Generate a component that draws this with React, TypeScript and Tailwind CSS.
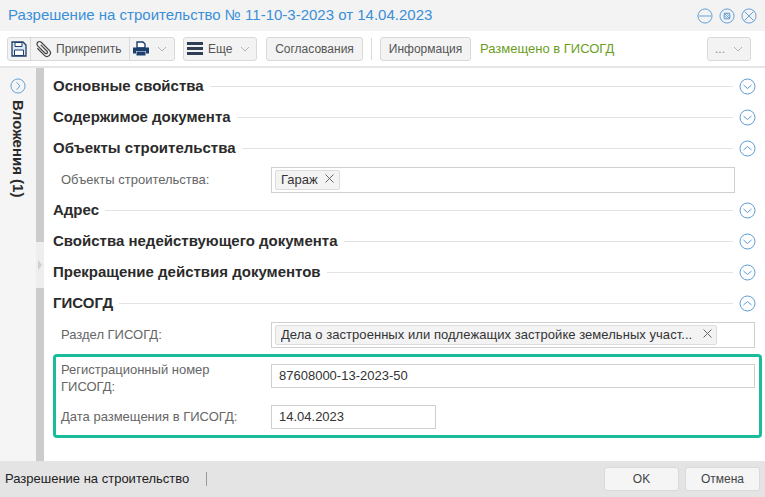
import React from "react";

function Circle({ children, size = 17, color = "#5b9bd5" }: { children?: React.ReactNode; size?: number; color?: string }) {
  return (
    <svg width={size} height={size} viewBox="0 0 17 17" fill="none" stroke={color} strokeWidth="1" className="shrink-0">
      <circle cx="8.5" cy="8.5" r="7.5" />
      {children}
    </svg>
  );
}

const Down = () => (
  <Circle>
    <path d="M4.5 7l4 3.5 4-3.5" />
  </Circle>
);
const Up = () => (
  <Circle>
    <path d="M4.5 10l4-3.5 4 3.5" />
  </Circle>
);

function Chevron({ className = "" }: { className?: string }) {
  return (
    <svg width="10" height="6" viewBox="0 0 10 6" fill="none" stroke="#b5b5b5" strokeWidth="1" className={className}>
      <path d="M1 1l4 4 4-4" />
    </svg>
  );
}

function X() {
  return (
    <svg width="9" height="9" viewBox="0 0 9 9" fill="none" stroke="#666" strokeWidth="1" className="mb-[2px] shrink-0">
      <path d="M.5.5l8 8M8.5.5l-8 8" />
    </svg>
  );
}

function Section({ title, open }: { title: string; open?: boolean }) {
  return (
    <div className="flex h-[31px] items-center">
      <span className="text-[15px] font-bold text-[#2b2b2b] whitespace-nowrap">{title}</span>
      <div className="ml-[6px] h-px flex-1 bg-[#e3e3e3]" />
      <div className="ml-[6px] w-[17px]">{open ? <Up /> : <Down />}</div>
    </div>
  );
}

function Btn({ children, className = "" }: { children: React.ReactNode; className?: string }) {
  return (
    <div className={"flex h-[24px] items-center rounded-[3px] border border-[#d9d9d9] bg-[#f3f3f3] text-[12px] text-[#555] " + className}>
      {children}
    </div>
  );
}

export default function App() {
  return (
    <div className="flex h-[497px] w-[765px] flex-col overflow-hidden bg-white font-['Liberation_Sans',Arial,sans-serif]">
      <div className="flex h-[31px] shrink-0 items-center bg-[#f3f3f3] pl-[8px] pr-[8px]">
        <span className="flex-1 text-[15px] text-[#3a8fd8] whitespace-nowrap">Разрешение на строительство № 11-10-3-2023 от 14.04.2023</span>
        <div className="flex gap-[6px]">
          <Circle size={16}>
            <path d="M2 8.5h13" />
          </Circle>
          <Circle size={16}>
            <path d="M5.5 5.5h6v6h-6zM5.5 5.5l6 6M8 5.5l3.5 3.5M5.5 8l3.5 3.5" />
          </Circle>
          <Circle size={16}>
            <path d="M4 4l9 9M13 4l-9 9" />
          </Circle>
        </div>
      </div>

      <div className="flex h-[37px] shrink-0 items-center border-b-2 border-[#e6e6e6] pl-[7px] pr-[14px]">
        <div className="flex h-[24px] w-[168px] items-center rounded-[3px] border border-[#d9d9d9] bg-[#f3f3f3]">
          <div className="flex h-full w-[23px] shrink-0 items-center justify-center border-r border-[#d9d9d9]">
            <svg width="16" height="16" viewBox="0 0 16 16" fill="none">
              <path d="M1 1h11l3 3v11H1z" stroke="#1f3f66" strokeWidth="1.3" fill="#dbe8f5" />
              <path d="M4 1.5h7v4H4z" fill="#fff" stroke="#1f3f66" />
              <path d="M3.5 9h9v5.5h-9z" fill="#fff" stroke="#1f3f66" />
            </svg>
          </div>
          <div className="flex h-full w-[99px] shrink-0 items-center gap-[3px] border-r border-[#d9d9d9] pl-[2px] text-[12px] text-[#555]">
            <svg width="20" height="20" viewBox="0 0 20 20" fill="none" stroke="#444" strokeWidth="1.2" className="shrink-0">
              <path transform="rotate(-45 10 10)" d="M6.5 5.5v10a3.5 3.5 0 0 0 7 0V4a2.5 2.5 0 0 0-5 0v10.5a1.4 1.4 0 0 0 2.8 0V5.5" />
            </svg>
            <span>Прикрепить</span>
          </div>
          <div className="flex h-full items-center gap-[8px] pl-[3px]">
            <svg width="16" height="15" viewBox="0 0 16 15">
              <path d="M4 1h6l2 2v4H4z" fill="#fff" stroke="#1c3f6e" strokeWidth="1.4" />
              <path d="M0 6.5h16v6h-3V10H3v2.5H0z" fill="#1c3f6e" />
              <path d="M3.5 10.5h9v4h-9z" fill="#1c3f6e" />
            </svg>
            <Chevron />
          </div>
        </div>

        <Btn className="ml-[8px] w-[74px] gap-[5px] pl-[3px]">
          <svg width="16" height="13" viewBox="0 0 16 13" fill="#2f3f55">
            <rect y="0" width="16" height="3" />
            <rect y="5" width="16" height="3" />
            <rect y="10" width="16" height="3" />
          </svg>
          <span>Еще</span>
          <Chevron className="ml-[3px]" />
        </Btn>

        <Btn className="ml-[9px] w-[97px] justify-center">Согласования</Btn>
        <div className="ml-[8px] h-[22px] w-px bg-[#d9d9d9]" />
        <Btn className="ml-[8px] w-[91px] justify-center">Информация</Btn>
        <span className="ml-[9px] text-[13px] text-[#6b9e1f]">Размещено в ГИСОГД</span>
        <Btn className="ml-auto w-[44px] justify-center gap-[8px] text-[#888]">
          <span>...</span>
          <Chevron />
        </Btn>
      </div>

      <div className="flex min-h-0 flex-1">
        <div className="flex w-[36px] shrink-0 flex-col items-center bg-[#f5f5f5] pt-[10px]">
          <Circle size={16}>
            <path d="M7 4.5l3.5 4-3.5 4" />
          </Circle>
          <span className="mt-[6px] text-[15px] font-bold text-[#2b2b2b] whitespace-nowrap [writing-mode:vertical-rl]">Вложения (1)</span>
        </div>
        <div className="flex w-[8px] shrink-0 flex-col bg-[#cccccc]">
          <div className="mt-[174px] flex h-[46px] items-center justify-center bg-[#eeeeee]">
            <div className="h-0 w-0 border-y-[5px] border-l-[4px] border-y-transparent border-l-[#cfcfcf]" />
          </div>
        </div>
        <div className="min-w-0 flex-1 pl-[9px] pr-[9px] pt-[3px]">
          <Section title="Основные свойства" />
          <Section title="Содержимое документа" />
          <Section title="Объекты строительства" open />
          <div className="flex h-[31px] items-center">
            <span className="w-[218px] shrink-0 pl-[8px] text-[13px] text-[#666]">Объекты строительства:</span>
            <div className="flex h-[26px] w-[464px] items-center border border-[#cfcfcf] pl-[3px]">
              <div className="flex h-[20px] w-[65px] items-center justify-between rounded-[2px] border border-[#dcdcdc] bg-[#f3f3f3] pl-[5px] pr-[5px] text-[13px] text-[#333]">
                Гараж <X />
              </div>
            </div>
          </div>
          <Section title="Адрес" />
          <Section title="Свойства недействующего документа" />
          <Section title="Прекращение действия документов" />
          <Section title="ГИСОГД" open />
          <div className="flex h-[31px] items-center">
            <span className="w-[218px] shrink-0 pl-[8px] text-[13px] text-[#666]">Раздел ГИСОГД:</span>
            <div className="flex h-[26px] w-[484px] items-center border border-[#cfcfcf] pl-[3px]">
              <div className="flex h-[20px] w-[442px] items-center justify-between rounded-[2px] border border-[#dcdcdc] bg-[#f3f3f3] pl-[5px] pr-[4px] text-[13px] text-[#333]">
                <span className="truncate tracking-[0.05px]">Дела о застроенных или подлежащих застройке земельных участ...</span>
                <X />
              </div>
            </div>
          </div>
          <div className="mt-[4px] w-[709px] rounded-[4px] border-[3px] border-[#1abc9c] pb-[6px] pt-[2px]">
            <div className="flex h-[34px] items-center">
              <span className="w-[215px] shrink-0 pl-[5px] pt-[3px] text-[13px] leading-[17px] text-[#666]">
                Регистрационный номер
                <br />
                ГИСОГД:
              </span>
              <div className="flex h-[24px] w-[484px] items-center border border-[#cfcfcf] pl-[7px] text-[13px] text-[#333]">87608000-13-2023-50</div>
            </div>
            <div className="mt-[12px] flex h-[24px] items-center">
              <span className="w-[215px] shrink-0 pl-[5px] text-[13px] text-[#666]">Дата размещения в ГИСОГД:</span>
              <div className="flex h-[24px] w-[165px] items-center border border-[#cfcfcf] pl-[7px] text-[13px] text-[#333]">14.04.2023</div>
            </div>
          </div>
        </div>
      </div>

      <div className="flex h-[36px] shrink-0 items-center bg-[#e4e4e4] pl-[5px] pr-[5px]">
        <span className="text-[13px] text-[#222]">Разрешение на строительство</span>
        <div className="ml-[17px] h-[14px] w-px bg-[#999]" />
        <div className="ml-auto flex gap-[6px]">
          <div className="flex h-[24px] w-[75px] items-center justify-center rounded-[3px] border border-[#d9d9d9] bg-[#f5f5f5] text-[12px] text-[#444]">OK</div>
          <div className="flex h-[24px] w-[75px] items-center justify-center rounded-[3px] border border-[#d9d9d9] bg-[#f5f5f5] text-[12px] text-[#444]">Отмена</div>
        </div>
      </div>
    </div>
  );
}
